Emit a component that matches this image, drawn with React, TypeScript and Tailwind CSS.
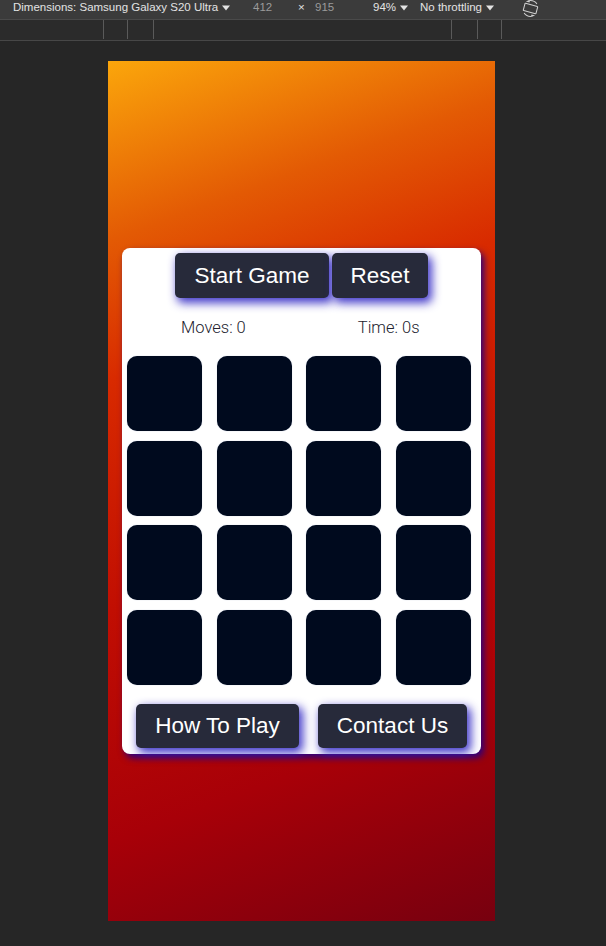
import React from "react";
import { MdScreenRotation } from "react-icons/md";

const ARIAL = { fontFamily: "'Liberation Sans', Arial, sans-serif" };

function Tri() {
  return (
    <svg width="8" height="6" viewBox="0 0 8 6" className="ml-[4px]">
      <path d="M0 0.5 L8 0.5 L4 5.5 Z" fill="#e3e3e3" />
    </svg>
  );
}

export default function App() {
  const tiles = Array.from({ length: 16 });
  const btn =
    "bg-[#272a3a] text-white rounded-[5px] shadow-[3px_4px_10px_1px_rgba(48,38,195,0.9)] leading-none text-[22.5px] pt-[1px]";
  return (
    <div className="w-[606px] h-[946px] bg-[#262626] flex flex-col overflow-hidden" style={ARIAL}>
      {/* toolbar */}
      <div className="h-[20px] bg-[#3b3b3b] border-b border-[#4a4a4a] flex items-center text-[11.5px] text-[#e3e3e3] pl-[13px] pb-[3px]">
        <span className="w-[240px] flex items-center">Dimensions: Samsung Galaxy S20 Ultra<Tri /></span>
        <span className="w-[45px] text-[#9a9a9a]">412</span>
        <span className="w-[17px]">×</span>
        <span className="w-[58px] text-[#9a9a9a]">915</span>
        <span className="w-[47px] flex items-center">94%<Tri /></span>
        <span className="w-[102px] flex items-center">No throttling<Tri /></span>
        <MdScreenRotation className="text-[#cfcfcf] rotate-[-30deg]" size={17} />
      </div>
      <div className="h-[21px] bg-[#2b2b2b] border-b border-[#474747] flex items-start pl-[103px]">
        <div className="h-[19px] w-px bg-[#5a5a5a]" />
        <div className="h-[19px] w-px bg-[#5a5a5a] ml-[23px]" />
        <div className="h-[19px] w-px bg-[#5a5a5a] ml-[25px]" />
        <div className="h-[19px] w-px bg-[#5a5a5a] ml-[297px]" />
        <div className="h-[19px] w-px bg-[#5a5a5a] ml-[25px]" />
        <div className="h-[19px] w-px bg-[#5a5a5a] ml-[23px]" />
      </div>

      {/* viewport */}
      <div className="ml-[108px] mt-[20px] w-[387px] h-[860px] bg-[linear-gradient(160deg,#fba60b_0%,#e35a04_18%,#d82a00_32%,#c10e02_55%,#a80008_78%,#77000f_100%)] flex items-start pt-[187px] pl-[14px]">
        <div className="w-[359px] h-[506px] bg-white rounded-[8px] shadow-[3px_4px_7px_#2c007e] flex flex-col">
          <div className="flex justify-center gap-[3px] pt-[5px]">
            <button className={`${btn} w-[154px] h-[45px]`} style={ARIAL}>Start Game</button>
            <button className={`${btn} w-[96px] h-[45px]`} style={ARIAL}>Reset</button>
          </div>
          <div className="flex h-[58px] items-center text-[16.5px] text-[#22222e] font-light pt-[2px]" style={{ fontFamily: "Roboto, sans-serif" }}>
            <span className="ml-[59px]">Moves: 0</span>
            <span className="ml-[112px]">Time: 0s</span>
          </div>
          <div className="grid grid-cols-[repeat(4,75px)] gap-x-[14.7px] gap-y-[9.7px] pl-[5px]">
            {tiles.map((_, i) => (
              <div key={i} className="w-[75px] h-[75px] bg-[#000a1e] rounded-[10px] shadow-[0_0_1px_rgba(120,140,180,0.6)]" />
            ))}
          </div>
          <div className="flex justify-center gap-[19px] mt-[19px]">
            <button className={`${btn} w-[163px] h-[44px]`} style={ARIAL}>How To Play</button>
            <button className={`${btn} w-[149px] h-[44px]`} style={ARIAL}>Contact Us</button>
          </div>
        </div>
      </div>
    </div>
  );
}
